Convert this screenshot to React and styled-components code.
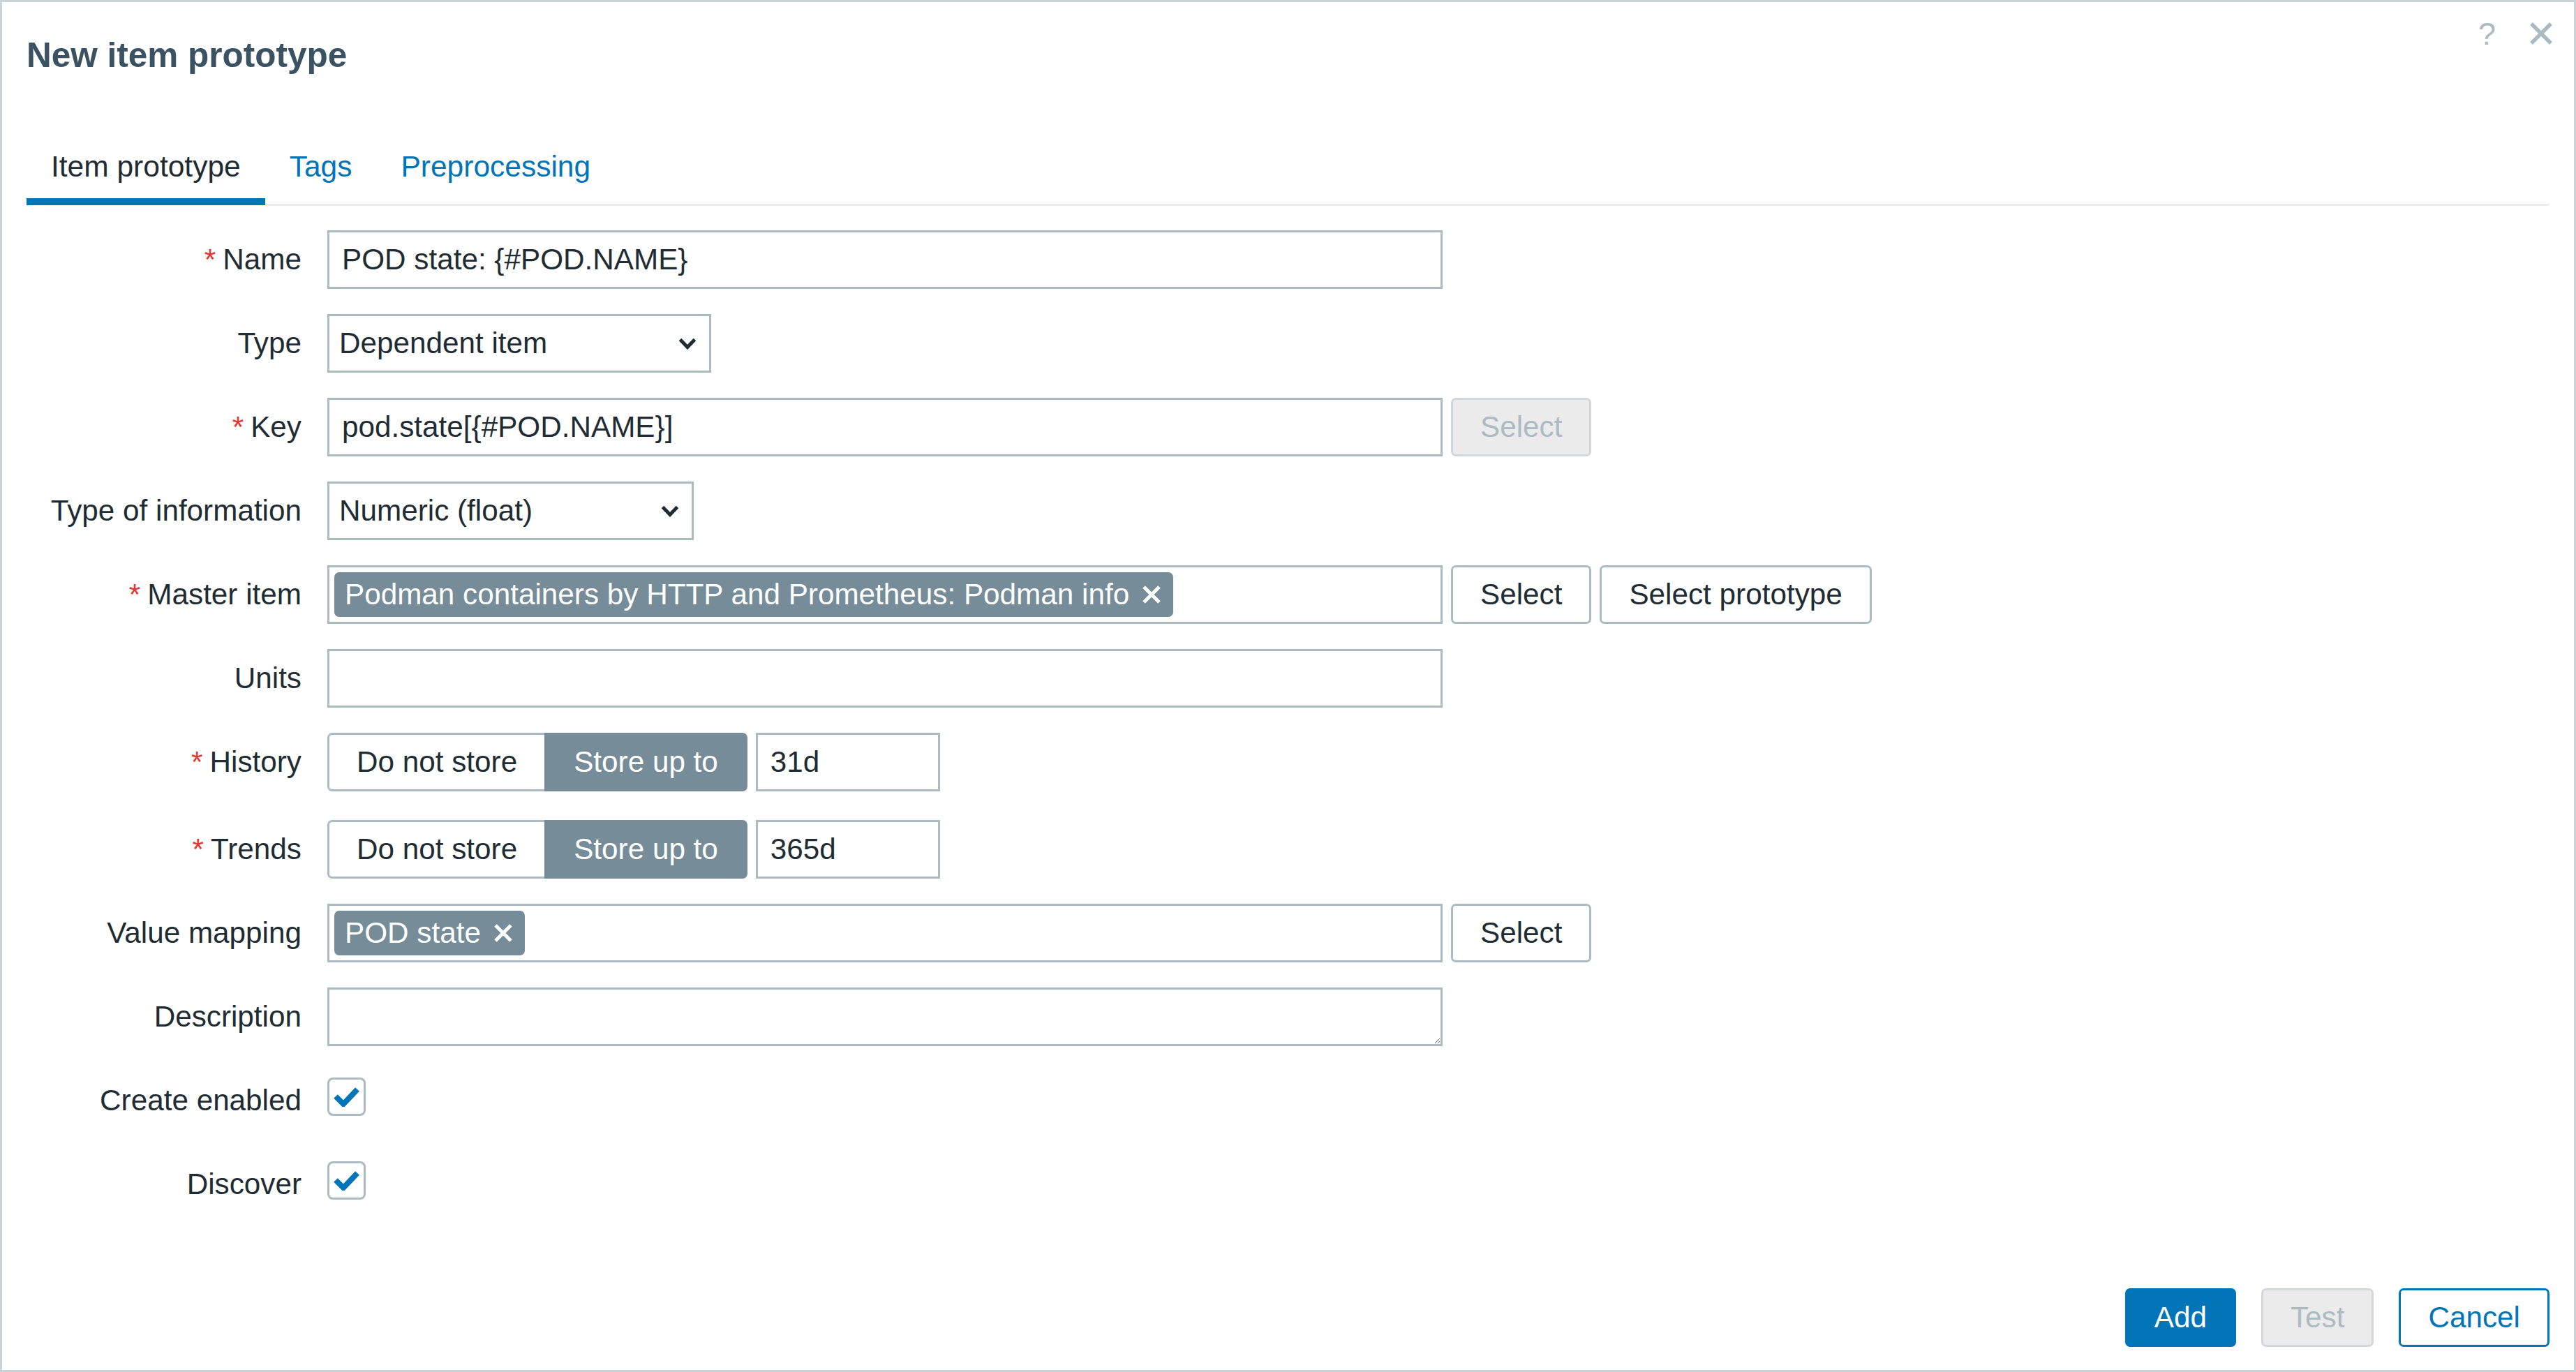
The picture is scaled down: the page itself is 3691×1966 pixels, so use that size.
import styled, { createGlobalStyle } from 'styled-components';

const GlobalStyle = createGlobalStyle`
  body {
    margin: 0;
    background: #ffffff;
    font-family: "Liberation Sans", Arial, sans-serif;
  }
`

const Dialog = styled.div`
  width: 3691px;
  height: 1966px;
  box-sizing: border-box;
  border: 3px solid #c9d3d8;
  padding: 0 35px 33px;
  background: #ffffff;
  display: flex;
  flex-direction: column;
  font-family: "Liberation Sans", Arial, sans-serif;
  color: #1f2c33;
`

const Header = styled.div`
  display: flex;
  justify-content: space-between;
  align-items: flex-start;
`
const Title = styled.h4`
  margin: 48px 0 0;
  font-size: 49.5px;
  font-weight: bold;
  line-height: 56px;
  color: #3a5261;
`
const HeaderTools = styled.div`
  display: flex;
  align-items: flex-start;
  gap: 48px;
  margin-top: 29px;
  margin-right: -5px;
`
const HelpIcon = styled.span`
  font-size: 45px;
  line-height: 1;
  margin-top: -6px;
  color: #acbbc2;
`

const TabList = styled.div`
  display: flex;
  margin-top: 102px;
  border-bottom: 3px solid #ebeef0;
`
const Tab = styled.div`
  padding: 0 35px 15px;
  font-size: 42.5px;
  line-height: 60px;
  color: ${p => (p.$active ? '#1f2c33' : '#0275b8')};
  border-bottom: 10px solid ${p => (p.$active ? '#0275b8' : 'transparent')};
  margin-bottom: -2px;
`

const Form = styled.div`
  display: flex;
  flex-direction: column;
  gap: 36px;
  margin-top: 35px;
`
const Row = styled.div`
  display: grid;
  grid-template-columns: 394px 1fr;
  column-gap: 37px;
  align-items: center;
  min-height: 84px;
  margin-top: ${p => p.$shift || 0}px;
`
const Label = styled.label`
  text-align: right;
  font-size: 42.25px;
  line-height: 1.2;
  color: #1f2c33;

  ${p => p.$required && `
    &::before {
      content: '*';
      color: #e33734;
      margin-right: 10px;
    }
  `}
`
const Field = styled.div`
  display: flex;
  align-items: center;
  gap: 12px;
`

const TextInput = styled.input`
  width: ${p => p.$w || 1598}px;
  height: 84px;
  box-sizing: border-box;
  margin: 0;
  border: 3px solid #acbbc2;
  padding: 0 18px;
  background: #ffffff;
  font-family: inherit;
  font-size: 42.25px;
  color: #1f2c33;
  outline: none;
`
const TextArea = styled.textarea`
  display: block;
  width: 1598px;
  height: 84px;
  box-sizing: border-box;
  margin: 0;
  border: 3px solid #acbbc2;
  padding: 14px 18px;
  font-family: inherit;
  font-size: 42.25px;
  color: #1f2c33;
  resize: vertical;
  outline: none;
`

const Select = styled.div`
  display: flex;
  align-items: center;
  justify-content: space-between;
  width: ${p => p.$w}px;
  height: 84px;
  box-sizing: border-box;
  border: 3px solid #acbbc2;
  padding: 0 18px 0 14px;
  font-size: 42.25px;
  color: #1f2c33;
  background: #ffffff;
`

const Button = styled.button`
  height: 84px;
  box-sizing: border-box;
  margin: 0;
  padding: 0 39px;
  border: 3px solid;
  border-radius: 7px;
  font-family: inherit;
  font-size: 42.25px;
  cursor: pointer;
  ${p => {
    switch (p.$variant) {
      case 'primary':
        return 'background: #0275b8; border-color: #0275b8; color: #ffffff;'
      case 'alt':
        return 'background: #ffffff; border-color: #0275b8; color: #0275b8;'
      case 'disabled':
        return 'background: #ebebeb; border-color: #d0d8dc; color: #acbbc2;'
      default:
        return 'background: #ffffff; border-color: #acbbc2; color: #1f2c33;'
    }
  }}
`

const MultiSelect = styled.div`
  display: flex;
  align-items: center;
  width: 1598px;
  height: 84px;
  box-sizing: border-box;
  border: 3px solid #acbbc2;
  padding: 0 7px;
  background: #ffffff;
`
const Pill = styled.span`
  display: inline-flex;
  align-items: center;
  gap: 18px;
  height: 64px;
  padding: 0 17px 0 15px;
  border-radius: 7px;
  background: #768d99;
  color: #ffffff;
  font-size: 42.25px;
  white-space: nowrap;
`

const Segmented = styled.div`
  display: flex;
`
const Segment = styled.div`
  display: flex;
  align-items: center;
  height: 84px;
  box-sizing: border-box;
  padding: 0 39px;
  font-size: 42.25px;
  border: 3px solid ${p => (p.$selected ? '#768d99' : '#acbbc2')};
  background: ${p => (p.$selected ? '#768d99' : '#ffffff')};
  color: ${p => (p.$selected ? '#ffffff' : '#1f2c33')};
  &:first-child {
    border-right: none;
    border-radius: 7px 0 0 7px;
  }
  &:last-child {
    border-radius: 0 7px 7px 0;
  }
`

const CheckBox = styled.span`
  display: flex;
  align-items: center;
  justify-content: center;
  width: 55px;
  height: 55px;
  box-sizing: border-box;
  border: 3px solid #acbbc2;
  border-radius: 8px;
  background: #ffffff;
  margin-bottom: 11px;
`

const Footer = styled.div`
  display: flex;
  justify-content: flex-end;
  gap: 36px;
  margin-top: auto;
`

const Chevron = () => (
  <svg width="26" height="17" viewBox="0 0 26 17">
    <polyline points="2.5,2.5 13,13.5 23.5,2.5" fill="none" stroke="#1f2c33" strokeWidth="5" />
  </svg>
)

const Cross = ({ size = 28, color = '#ffffff', width = 5 }) => (
  <svg width={size} height={size} viewBox="0 0 28 28">
    <path d="M3 3 L25 25 M25 3 L3 25" stroke={color} strokeWidth={width} fill="none" />
  </svg>
)

const Check = () => (
  <svg width="37" height="28" viewBox="0 0 37 28">
    <polyline points="3,13 14,24 34,3" fill="none" stroke="#0275b8" strokeWidth="8" />
  </svg>
)

const StoreChoice = ({ value }) => (
  <Field>
    <Segmented>
      <Segment>Do not store</Segment>
      <Segment $selected>Store up to</Segment>
    </Segmented>
    <TextInput $w={264} defaultValue={value} />
  </Field>
)

const App = () => {
  return (
    <>
      <GlobalStyle />
      <Dialog>
        <Header>
          <Title>New item prototype</Title>
          <HeaderTools>
            <HelpIcon>?</HelpIcon>
            <svg width="34" height="32" viewBox="0 0 34 32">
              <path d="M3 2 L31 30 M31 2 L3 30" stroke="#acbbc2" strokeWidth="5.5" fill="none" />
            </svg>
          </HeaderTools>
        </Header>

        <TabList>
          <Tab $active>Item prototype</Tab>
          <Tab>Tags</Tab>
          <Tab>Preprocessing</Tab>
        </TabList>

        <Form>
          <Row>
            <Label $required>Name</Label>
            <Field>
              <TextInput defaultValue="POD state: {#POD.NAME}" />
            </Field>
          </Row>
          <Row>
            <Label>Type</Label>
            <Field>
              <Select $w={550}>
                Dependent item
                <Chevron />
              </Select>
            </Field>
          </Row>
          <Row>
            <Label $required>Key</Label>
            <Field>
              <TextInput defaultValue="pod.state[{#POD.NAME}]" />
              <Button $variant="disabled">Select</Button>
            </Field>
          </Row>
          <Row>
            <Label>Type of information</Label>
            <Field>
              <Select $w={525}>
                Numeric (float)
                <Chevron />
              </Select>
            </Field>
          </Row>
          <Row>
            <Label $required>Master item</Label>
            <Field>
              <MultiSelect>
                <Pill>
                  Podman containers by HTTP and Prometheus: Podman info
                  <Cross />
                </Pill>
              </MultiSelect>
              <Button>Select</Button>
              <Button>Select prototype</Button>
            </Field>
          </Row>
          <Row>
            <Label>Units</Label>
            <Field>
              <TextInput defaultValue="" />
            </Field>
          </Row>
          <Row>
            <Label $required>History</Label>
            <StoreChoice value="31d" />
          </Row>
          <Row $shift={5}>
            <Label $required>Trends</Label>
            <StoreChoice value="365d" />
          </Row>
          <Row>
            <Label>Value mapping</Label>
            <Field>
              <MultiSelect>
                <Pill>
                  POD state
                  <Cross />
                </Pill>
              </MultiSelect>
              <Button>Select</Button>
            </Field>
          </Row>
          <Row>
            <Label>Description</Label>
            <Field>
              <TextArea defaultValue="" />
            </Field>
          </Row>
          <Row>
            <Label>Create enabled</Label>
            <Field>
              <CheckBox>
                <Check />
              </CheckBox>
            </Field>
          </Row>
          <Row>
            <Label>Discover</Label>
            <Field>
              <CheckBox>
                <Check />
              </CheckBox>
            </Field>
          </Row>
        </Form>

        <Footer>
          <Button $variant="primary">Add</Button>
          <Button $variant="disabled">Test</Button>
          <Button $variant="alt">Cancel</Button>
        </Footer>
      </Dialog>
    </>
  )
}

export default App
